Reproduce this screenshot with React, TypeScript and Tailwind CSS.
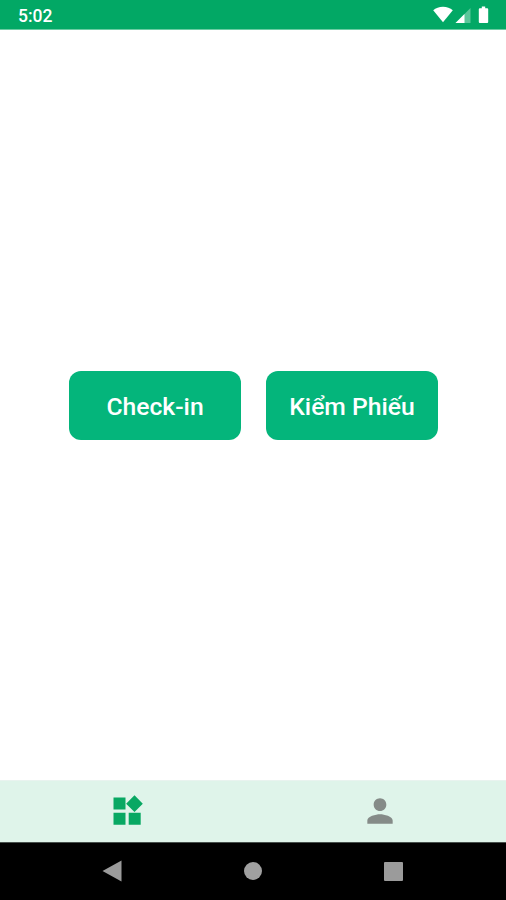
import React from "react";

function StatusBar() {
  return (
    <header className="flex h-[30px] shrink-0 items-start justify-between border-b border-[#6bcca3] bg-[#02a865] pl-[18px] pr-[17px] text-white">
      <span className="pt-[6px] text-[17.5px] leading-5 font-medium">5:02</span>
      <svg className="mt-[6px] h-[17px] w-[56px]" viewBox="0 0 56 17" fill="#fff">
        <path d="M0.2 4.2C2.8 1.9 6.1.7 10 .7s7.200 1.200 9.800 3.500L10 16.300Z" />
        <path d="M37.500 2v15H22.500Z" opacity=".35" />
        <path d="M31.500 8v9h-9Z" />
        <path d="M48.800.5h3.400v1.700h2a1 1 0 0 1 1 1V16a1 1 0 0 1-1 1h-7.400a1 1 0 0 1-1-1V3.200a1 1 0 0 1 1-1h2Z" />
      </svg>
    </header>
  );
}

function ActionButton({ label }: { label: string }) {
  return (
    <button className="h-[69px] w-[172px] rounded-[12px] bg-[#04b57b] pt-[2px] text-[24.7px] leading-7 font-medium whitespace-nowrap text-white">
      {label}
    </button>
  );
}

function TabBar() {
  return (
    <nav className="grid h-[62px] shrink-0 grid-cols-2 border-t border-[#e9f3ef] bg-[#dff4ea]">
      <button className="flex items-start justify-center pt-[14px] pl-[2px]" aria-label="Dashboard">
        <svg className="h-[30px] w-[30px]" viewBox="0 0 30 30" fill="#08a863">
          <path d="M.5 2.500h12v12H.5ZM.5 17.800h12v12H.5ZM15.700 17.800h12v12h-12ZM21.500.3 29.800 8.700 21.500 17 13.100 8.700Z" />
        </svg>
      </button>
      <button className="flex items-start justify-center pt-[11px]" aria-label="Profile">
        <svg className="h-[38px] w-[38px]" viewBox="0 0 24 24" fill="#858b88">
          <path d="M12 12c2.210 0 4-1.790 4-4s-1.790-4-4-4-4 1.790-4 4 1.790 4 4 4Zm0 2c-2.670 0-8 1.340-8 4v2h16v-2c0-2.660-5.330-4-8-4Z" />
        </svg>
      </button>
    </nav>
  );
}

function SystemNavigation() {
  return (
    <footer className="flex h-[58px] shrink-0 items-center justify-between border-t border-[#47504c] bg-black pr-[103px] pb-[1px] pl-[102px]">
      <svg className="h-[22px] w-[20px]" viewBox="0 0 20 22" fill="#9b9b9b">
        <path d="M.5 11 19.500.5v21Z" />
      </svg>
      <span className="h-[18px] w-[18px] rounded-full bg-[#a0a0a0]" />
      <span className="h-[19px] w-[19px] rounded-[1px] bg-[#9b9b9b]" />
    </footer>
  );
}

export default function App() {
  return (
    <div className="flex h-[900px] w-[506px] flex-col overflow-hidden bg-white font-['Roboto',sans-serif]">
      <StatusBar />
      <main className="flex flex-1 items-center justify-center gap-[25px] pt-[1px] pl-[1px]">
        <ActionButton label="Check-in" />
        <ActionButton label="Kiểm Phiếu" />
      </main>
      <TabBar />
      <SystemNavigation />
    </div>
  );
}
